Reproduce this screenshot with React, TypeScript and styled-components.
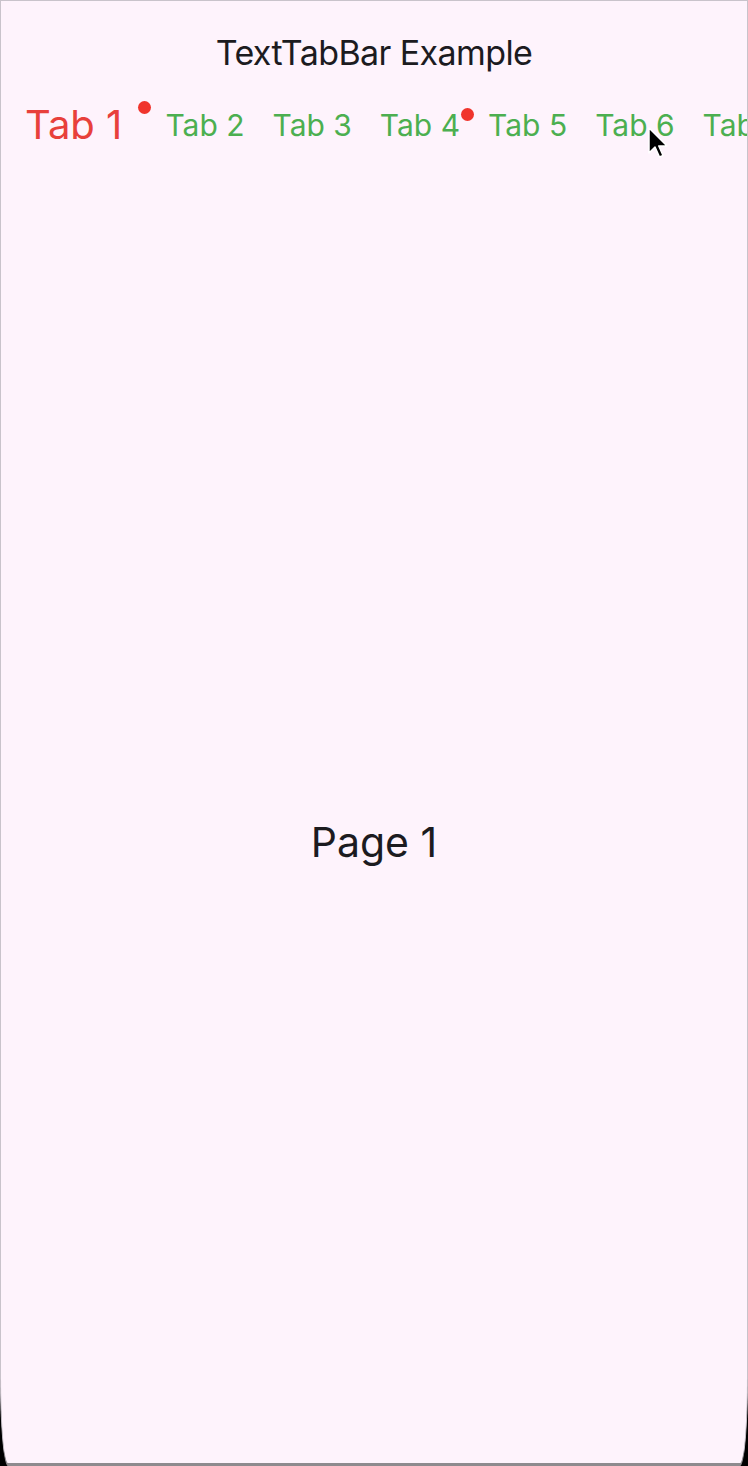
import React from "react";
import styled, { createGlobalStyle } from "styled-components";

const Global = createGlobalStyle`
  html, body { margin: 0; padding: 0; background: #000; }
  body { font-family: Inter, "Noto Sans", sans-serif; }
  #root { width: 748px; height: 1466px; }
`;

const Frame = styled.div`
  position: relative;
  box-sizing: border-box;
  width: 748px;
  height: 1466px;
  background: #fef3fc;
  border: 1px solid #c9c3cb;
  border-bottom: 3px solid #8e8a8e;
  border-bottom-left-radius: 8px 90px;
  border-bottom-right-radius: 8px 90px;
  display: flex;
  flex-direction: column;
  overflow: hidden;
`;

const Title = styled.h1`
  margin: 0;
  padding-top: 31px;
  height: 42px;
  text-align: center;
  font-family: Inter, sans-serif;
  font-weight: 400;
  font-size: 34px;
  line-height: 42px;
  letter-spacing: -0.6px;
  color: #1c1b1f;
`;

const TabRow = styled.div`
  display: flex;
  align-items: flex-end;
  padding-left: 24px;
  margin-top: 19px;
  height: 52px;
  white-space: nowrap;
`;

const Tab = styled.div<{ $active?: boolean }>`
  position: relative;
  flex: none;
  margin-right: ${(p) => (p.$active ? "43px" : "28px")};
  font-family: Inter, sans-serif;
  font-size: ${(p) => (p.$active ? "40px" : "30px")};
  line-height: 40px;
  color: ${(p) => (p.$active ? "#e8403b" : "#4caf50")};
`;

const Dot = styled.span<{ $right: number; $top: number }>`
  position: absolute;
  right: ${(p) => p.$right}px;
  top: ${(p) => p.$top}px;
  width: 13px;
  height: 13px;
  border-radius: 50%;
  background: #f0342c;
`;

const Body = styled.div`
  flex: 1;
  display: flex;
  align-items: center;
  justify-content: center;
  padding-top: 76px;
`;

const PageLabel = styled.div`
  font-family: Inter, sans-serif;
  font-size: 41px;
  color: #1c1b1f;
`;

const Cursor = styled.svg`
  position: absolute;
  left: 647px;
  top: 126px;
`;

const tabs = [1, 2, 3, 4, 5, 6, 7];

export default function App() {
  return (
    <>
      <Global />
      <Frame>
        <Title>TextTabBar Example</Title>
        <TabRow>
          {tabs.map((n) => (
            <Tab key={n} $active={n === 1}>
              Tab {n}
              {n === 1 && <Dot $right={-29} $top={-4} />}
              {n === 4 && <Dot $right={-14} $top={3} />}
            </Tab>
          ))}
        </TabRow>
        <Body>
          <PageLabel>Page 1</PageLabel>
        </Body>
        <Cursor width="22" height="34" viewBox="0 0 22 34">
          <path
            d="M1 1 L1 26 L7 20 L11.5 30 L15 28.5 L10.8 19 L19 19 Z"
            fill="#000"
            stroke="#fff"
            strokeWidth="1.5"
            strokeLinejoin="round"
          />
        </Cursor>
      </Frame>
    </>
  );
}
